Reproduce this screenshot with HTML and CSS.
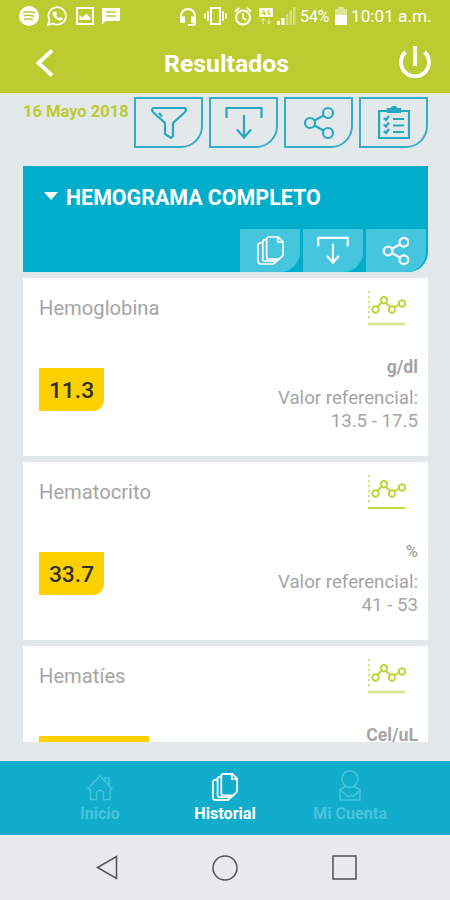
FILE: index.html
```
<!DOCTYPE html>
<html lang="es">
<head>
  <meta charset="UTF-8">
  <meta name="viewport" content="width=device-width, initial-scale=1">
  <title>Resultados</title>
  <link rel="stylesheet" href="styles.css">
</head>
<body>

<!-- Shared icons -->
<svg class="sprite" width="0" height="0">
  <symbol id="download" viewBox="0 0 38 34">
    <path d="M1.500 12V2h35v10M19 9v22M12 23.500l7 8 7-8"/>
  </symbol>
  <symbol id="share" viewBox="0 0 32 34">
    <circle cx="7" cy="17" r="5"/>
    <circle cx="25" cy="7" r="5"/>
    <circle cx="25" cy="27" r="5"/>
    <path d="M11.500 14.500l9-5M11.500 19.500l9 5"/>
  </symbol>
  <symbol id="pages" viewBox="0 0 28 30">
    <path d="M12 1h10l5 5v14l-4 4H12q-2 0-2-2V3q0-2 2-2zM21.500 1v5.500H27"/>
    <path d="M10 4H8q-2 0-2 2v18q0 2 2 2h12l3-2M6 7H4Q1 7 1 10v16q0 3 3 3h13l6-5"/>
  </symbol>
  <symbol id="chart" viewBox="0 0 38 36">
    <path class="axis" d="M1 1v30"/>
    <path d="M9.200 17l5-5M17.500 12.500l5 4.500M26.500 17.500l5-3.500"/>
    <circle cx="7.500" cy="19.500" r="3.200"/>
    <circle cx="16" cy="10.200" r="3.200"/>
    <circle cx="24" cy="19.500" r="3.200"/>
    <circle cx="34" cy="13.500" r="3.200"/>
    <path class="base" d="M0 34h37.500"/>
  </symbol>
</svg>

<div class="app">
  <header class="header">
    <div class="status">
      <div class="status-left">
        <svg width="20" height="20" viewBox="0 0 20 20">
          <circle cx="10" cy="10" r="10" fill="#fff"/>
          <path d="M4 6.500q6-1.500 12 .5M4.500 10q5.500-1.500 10.500.5M5 13.500q5-1.500 9 .3" fill="none" stroke="#bccb2f" stroke-width="1.500"/>
        </svg>
        <svg width="21" height="20" viewBox="0 0 21 20">
          <path d="M1 19l1.500-5A8.700 8.700 0 1 1 6 17.500z" fill="none" stroke="#fff" stroke-width="1.800"/>
          <path d="M7 5.500l2 0 1 2.500-1 1.200q1 2 3 3l1.300-1.300 2.400 1.300q0 2.300-2.200 2.600-2.500.2-5.300-2.700T5.500 7.500q.3-1.500 1.500-2z" fill="#fff"/>
        </svg>
        <svg width="18" height="18" viewBox="0 0 18 18">
          <path d="M1 1h16v16H1z" fill="none" stroke="#fff" stroke-width="2"/>
          <path d="M3.500 13V8l3 2.500 4-4 4 4.500v2z" fill="#fff"/>
        </svg>
        <svg width="18" height="18" viewBox="0 0 18 18">
          <path d="M0 1h18v13H4l-4 3.500z" fill="#fff"/>
          <path d="M4 5h10M4 9h10" stroke="#bccb2f" stroke-width="1.300"/>
        </svg>
      </div>
      <div class="status-right">
        <svg width="18" height="19" viewBox="0 0 18 19">
          <path d="M2 12V9a7 7 0 0 1 14 0v7q0 2-3 2H9" fill="none" stroke="#fff" stroke-width="2"/>
          <path d="M1 9.500h5v6.500H3q-2 0-2-2zM12 9.500h5v6.500h-5z" fill="#fff"/>
        </svg>
        <svg class="vibrate" width="23" height="18" viewBox="0 0 23 18">
          <path d="M7 1h9v16H7z" fill="none" stroke="#fff" stroke-width="2"/>
          <path d="M4 4v10M1 6.500v5M19 4v10M22 6.500v5" stroke="#fff" stroke-width="1.700"/>
        </svg>
        <svg class="alarm" width="18" height="19" viewBox="0 0 18 19">
          <circle cx="9" cy="10.500" r="7" fill="none" stroke="#fff" stroke-width="2"/>
          <path d="M9 6v5l3.500 2M1 4.500L5 1M17 4.500L13 1" fill="none" stroke="#fff" stroke-width="1.700"/>
        </svg>
        <svg class="network" width="14" height="17" viewBox="0 0 14 17">
          <rect width="14" height="9" rx="1" fill="#fff" opacity=".9"/>
          <path d="M5 2L3 5.500h3.500M5.500 3.500V7M11 3H9v3h2V5" fill="none" stroke="#bccb2f"/>
          <path d="M4 16v-5M2 12.500L4 10.500l2 2M10 10.500v5M8 13.500l2 2 2-2" fill="none" stroke="#fff" opacity=".75"/>
        </svg>
        <svg class="signal" width="19" height="18" viewBox="0 0 19 18">
          <path d="M0 14h3v4H0zM4.500 11h3v7h-3z" fill="#fff"/>
          <path d="M9 7h2.500v11H9zM12.500 3.500H15V18h-2.500zM16 0h2.500v18H16z" fill="#fff" opacity=".38"/>
        </svg>
        <span class="percent">54%</span>
        <svg class="battery" width="12" height="18" viewBox="0 0 12 18">
          <path d="M3 0h6v2h3v6H0V2h3z" fill="#fff" opacity=".5"/>
          <path d="M0 8h12v10H0z" fill="#fff"/>
        </svg>
        <span class="clock">10:01 a.m.</span>
      </div>
    </div>

    <div class="title-bar">
      <svg class="back" width="18" height="28" viewBox="0 0 18 28">
        <path d="M16 1.500L2.500 14 16 26.500" fill="none" stroke="#fff" stroke-width="3.800"/>
      </svg>
      <h1>Resultados</h1>
      <svg class="power" width="32" height="32" viewBox="0 0 32 32">
        <path d="M6.500 6A14 14 0 1 0 25.500 6M16 0v20" fill="none" stroke="#fff" stroke-width="3.800"/>
      </svg>
    </div>
  </header>

  <main class="content">
    <div class="toolbar">
      <span class="date">16 Mayo 2018</span>
      <div class="tools">
        <div class="tool">
          <svg width="36" height="32" viewBox="0 0 36 32">
            <path d="M2 1h32q2 2-.5 4.500L22 16v13l-2 2-6-4V16L2.500 5.500Q0 3 2 1zM8 6l3 3.500"/>
          </svg>
        </div>
        <div class="tool"><svg width="38" height="34"><use href="#download"/></svg></div>
        <div class="tool"><svg width="32" height="34"><use href="#share"/></svg></div>
        <div class="tool">
          <svg width="32" height="34" viewBox="0 0 32 34">
            <path d="M1 5h30v27H1z"/>
            <path d="M10 6V3h3q3-4 6 0h3v3z" fill="#25a9c2"/>
            <path d="M6 12l2 2 3-4M6 18.500l2 2 3-4M6 25l2 2 3-4M15 13h11M15 19.500h11M15 26h11"/>
          </svg>
        </div>
      </div>
    </div>

    <div class="results">
      <section class="group">
        <div class="group-title"><span class="caret"></span>HEMOGRAMA COMPLETO</div>
        <div class="group-tools">
          <div class="group-tool"><svg class="thin" width="27" height="29"><use href="#pages"/></svg></div>
          <div class="group-tool"><svg width="32" height="29"><use href="#download"/></svg></div>
          <div class="group-tool"><svg width="28" height="30"><use href="#share"/></svg></div>
        </div>
      </section>

      <article class="card">
        <div class="card-head">
          <span class="name">Hemoglobina</span>
          <svg class="chart" width="38" height="36"><use href="#chart"/></svg>
        </div>
        <div class="card-body">
          <span class="value">11.3</span>
          <div class="reference">
            <strong>g/dl</strong>
            <span>Valor referencial:</span>
            <span class="range">13.5 - 17.5</span>
          </div>
        </div>
      </article>

      <article class="card">
        <div class="card-head">
          <span class="name">Hematocrito</span>
          <svg class="chart solid" width="38" height="36"><use href="#chart"/></svg>
        </div>
        <div class="card-body">
          <span class="value">33.7</span>
          <div class="reference">
            <strong class="percent-unit">%</strong>
            <span>Valor referencial:</span>
            <span class="range">41 - 53</span>
          </div>
        </div>
      </article>

      <article class="card">
        <div class="card-head">
          <span class="name">Hematíes</span>
          <svg class="chart" width="38" height="36"><use href="#chart"/></svg>
        </div>
        <div class="card-body">
          <span class="value wide"></span>
          <div class="reference">
            <strong>Cel/uL</strong>
          </div>
        </div>
      </article>
    </div>
  </main>

  <nav class="tabs">
    <div class="tab">
      <svg width="26" height="26" viewBox="0 0 26 26">
        <path d="M1 13.500L13 1l12 12.500-2 1.500v9.500h-6.500V17q-3.500-3-7 0v7.500H3.500V15zM18 5V3h4v7"/>
      </svg>
      <span>Inicio</span>
    </div>
    <div class="tab active">
      <svg width="26" height="28"><use href="#pages"/></svg>
      <span>Historial</span>
    </div>
    <div class="tab">
      <svg width="22" height="31" viewBox="0 0 22 31">
        <ellipse cx="11" cy="9" rx="8" ry="8.300"/>
        <path d="M7 16.500L1 19.500V30h20V19.500l-6-3M1.500 20l8 7 3-2 2 1.500 6-6"/>
      </svg>
      <span>Mi Cuenta</span>
    </div>
  </nav>

  <!-- Android navigation -->
  <div class="system-nav">
    <svg width="22" height="25" viewBox="0 0 22 25"><path d="M20.500 1.500v22L1.500 12.500z"/></svg>
    <svg width="26" height="26" viewBox="0 0 26 26"><circle cx="13" cy="13" r="12"/></svg>
    <svg width="25" height="25" viewBox="0 0 25 25"><path d="M1 1h23v23H1z"/></svg>
  </div>
</div>

</body>
</html>
```
FILE: styles.css
```
* {
  box-sizing: border-box;
}

body {
  margin: 0;
  font-family: Roboto, "Liberation Sans", sans-serif;
  background: #e3e8eb;
}

svg {
  display: block;
  flex: none;
}

.sprite {
  position: absolute;
}

.app {
  display: flex;
  flex-direction: column;
  width: 450px;
  height: 900px;
  overflow: hidden;
}

/* Header */
.header {
  flex: none;
  height: 93px;
  background: #bccb2f;
  color: #fff;
}

.status {
  display: flex;
  justify-content: space-between;
  height: 32px;
  padding: 0 19px 0 19px;
}

.status-left,
.status-right {
  display: flex;
  align-items: center;
}

.status-left {
  gap: 8px;
}

.vibrate { margin-left: 7px; }
.alarm { margin-left: 7px; }
.network { margin-left: 7px; }
.signal { margin-left: 4px; }

.percent {
  width: 30px;
  margin-left: 4px;
  font-size: 15.800px;
  white-space: nowrap;
}

.battery {
  margin-left: 5px;
}

.clock {
  width: 80px;
  margin-left: 4px;
  font-size: 17.200px;
  white-space: nowrap;
}

.title-bar {
  display: flex;
  align-items: center;
  justify-content: space-between;
  height: 61px;
  padding: 0 19px 0 36px;
}

.title-bar h1 {
  margin: 2px 0 0;
  font-size: 24.800px;
  line-height: 28px;
  font-weight: 700;
}

.power {
  margin-bottom: 2px;
}

/* Content */
.content {
  flex: none;
  height: 668px;
  padding: 4px 22px 0 23px;
}

.toolbar {
  display: flex;
  justify-content: space-between;
}

.date {
  padding-top: 5px;
  color: #bccb2f;
  font-size: 16.500px;
  line-height: 19px;
  font-weight: 700;
  white-space: nowrap;
}

.tools {
  display: flex;
  gap: 6px;
}

.tool {
  display: flex;
  align-items: center;
  justify-content: center;
  width: 69px;
  height: 51px;
  border: 2px solid #37aec7;
  border-radius: 0 0 22px 0;
}

.tool svg {
  fill: none;
  stroke: #25a9c2;
  stroke-width: 2.200;
}

.results {
  height: 576px;
  margin-top: 18px;
  overflow: hidden;
}

.group {
  display: flex;
  flex-direction: column;
  justify-content: space-between;
  height: 106px;
  background: #00aecb;
  border-radius: 0 0 20px 0;
  overflow: hidden;
}

.group-title {
  display: flex;
  align-items: center;
  height: 64px;
  padding-left: 21px;
  color: #fff;
  font-size: 21.400px;
  font-weight: 700;
  white-space: nowrap;
}

.caret {
  margin: -3px 8px 0 0;
  border: 7px solid transparent;
  border-top: 8px solid #fff;
  border-bottom: 0;
}

.group-tools {
  display: flex;
  justify-content: flex-end;
  gap: 3px;
  padding-right: 2px;
}

.group-tool {
  display: flex;
  align-items: center;
  justify-content: center;
  width: 60px;
  height: 43px;
  background: #46c5df;
  border-radius: 0 0 20px 0;
}

.group-tool svg {
  fill: none;
  stroke: #fff;
  stroke-width: 2.500;
}

.group-tool .thin {
  stroke-width: 1.700;
}

.card {
  height: 178px;
  margin-top: 6px;
  padding: 12px 10px 0 16px;
  background: #fff;
}

.card-head {
  display: flex;
  justify-content: space-between;
  height: 64px;
  padding-right: 12px;
}

.name {
  padding-top: 6px;
  color: #a5a5a5;
  font-size: 20.200px;
  line-height: 24px;
}

.chart {
  --base-color: #dce79b;
  --base-width: 3;
  fill: none;
  stroke: #bed334;
  stroke-width: 1.900;
}

.chart.solid {
  --base-color: #c5da3c;
  --base-width: 2.200;
}

.base {
  stroke: var(--base-color);
  stroke-width: var(--base-width);
}

.axis {
  stroke-dasharray: 2 3;
  stroke-width: 1.300;
}

.card-body {
  display: flex;
  justify-content: space-between;
}

.value {
  width: 65px;
  height: 43px;
  margin-top: 14px;
  background: #fdd000;
  border-radius: 0 0 11px 0;
  color: #303030;
  font-size: 22.800px;
  line-height: 46px;
  font-weight: 500;
  text-align: center;
}

.value.wide {
  width: 110px;
}

.reference {
  display: flex;
  flex-direction: column;
  color: #a5a5a5;
  font-size: 18.700px;
  line-height: 22.500px;
  text-align: right;
  white-space: nowrap;
}

.reference strong {
  margin: 5px 0 11px;
  font-size: 17.700px;
  line-height: 17px;
  font-weight: 700;
}

.reference .percent-unit {
  font-size: 16.500px;
  font-weight: 500;
}

/* Bottom tabs */
.tabs {
  display: flex;
  flex: none;
  justify-content: center;
  height: 74px;
  background: #12adcc;
}

.tab {
  display: flex;
  flex-direction: column;
  align-items: center;
  justify-content: flex-end;
  width: 125px;
  padding-bottom: 12px;
  color: #46c3dd;
  font-size: 16.200px;
  line-height: 18px;
  font-weight: 700;
}

.tab svg {
  margin-bottom: 4px;
  fill: none;
  stroke: #46c3dd;
  stroke-width: 1.500;
}

.tab.active {
  color: #fff;
}

.tab.active svg {
  stroke: #fff;
  stroke-width: 1.900;
}

.system-nav {
  display: flex;
  flex: none;
  align-items: center;
  justify-content: space-between;
  height: 65px;
  padding: 0 93px 0 96px;
  background: #e8eaed;
}

.system-nav svg {
  fill: none;
  stroke: #4c5359;
  stroke-width: 1.500;
}
```
